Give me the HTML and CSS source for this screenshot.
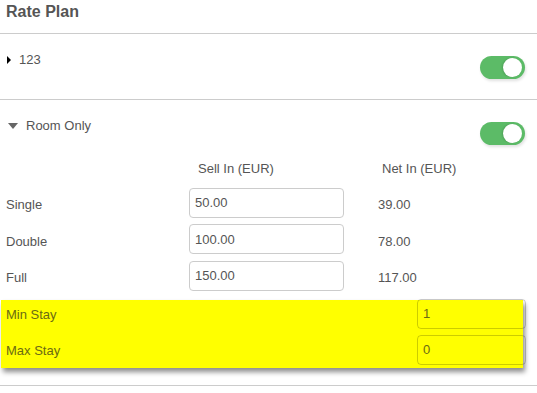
FILE: index.html
```html
<!DOCTYPE html>
<html lang="en">
<head>
  <meta charset="UTF-8">
  <title>Rate Plan</title>
  <link rel="stylesheet" href="styles.css">
</head>
<body>
  <div class="panel">
    <h2 class="panel-title">Rate Plan</h2>

    <div class="plan">
      <div class="plan-head">
        <div class="plan-name"><span class="caret caret-right"></span>123</div>
        <span class="toggle on"><span class="knob"></span></span>
      </div>
    </div>

    <div class="plan open">
      <div class="plan-head">
        <div class="plan-name"><span class="caret caret-down"></span>Room Only</div>
        <span class="toggle on"><span class="knob"></span></span>
      </div>

      <div class="rates">
        <div></div>
        <div class="col-head sell">Sell In (EUR)</div>
        <div class="col-head net">Net In (EUR)</div>

        <div class="rate-label">Single</div>
        <input class="rate-input" type="text" value="50.00">
        <div class="net-value">39.00</div>

        <div class="rate-label">Double</div>
        <input class="rate-input" type="text" value="100.00">
        <div class="net-value">78.00</div>

        <div class="rate-label">Full</div>
        <input class="rate-input" type="text" value="150.00">
        <div class="net-value">117.00</div>
      </div>

      <div class="stay-box">
        <div class="stay-row">
          <span class="stay-label">Min Stay</span>
          <input class="stay-input" type="text" value="1">
        </div>
        <div class="stay-row">
          <span class="stay-label">Max Stay</span>
          <input class="stay-input" type="text" value="0">
        </div>
      </div>
    </div>
  </div>
</body>
</html>
```

FILE: styles.css
```css
body {
  margin: 0;
  font-family: "Liberation Sans", Arial, sans-serif;
  font-size: 13px;
  color: #555;
  background: #fff;
}

.panel {
  width: 537px;
}

.panel-title {
  margin: 0;
  padding: 3px 6px 0;
  height: 30px;
  font-size: 16px;
  font-weight: bold;
  color: #555;
  border-bottom: 1px solid #ccc;
}

.plan {
  border-bottom: 1px solid #ccc;
  height: 65px;
}

.plan.open {
  height: 285px;
}

.plan-head {
  display: flex;
  justify-content: space-between;
  align-items: flex-start;
  padding: 18px 12px 0 6px;
}

.plan-name {
  display: flex;
  align-items: center;
  line-height: 16px;
}

.caret {
  display: inline-block;
  width: 0;
  height: 0;
}

.caret-right {
  margin: 0 8px 0 1px;
  border-top: 4px solid transparent;
  border-bottom: 4px solid transparent;
  border-left: 4px solid #000;
}

.caret-down {
  margin: 0 8px 0 2px;
  border-left: 5px solid transparent;
  border-right: 5px solid transparent;
  border-top: 6px solid #666;
}

.toggle {
  position: relative;
  display: inline-block;
  width: 45px;
  height: 23px;
  margin-top: 4px;
  border-radius: 12px;
  background: #5cbb67;
  box-shadow: 1px 2px 3px rgba(0, 0, 0, 0.12);
}

.knob {
  position: absolute;
  top: 2px;
  right: 3px;
  width: 19px;
  height: 19px;
  border-radius: 50%;
  background: #fff;
  box-shadow: -1px 0 2px rgba(0, 0, 0, 0.15);
}

.rates {
  display: grid;
  grid-template-columns: 183px 155px auto;
  row-gap: 6.5px;
  padding: 16px 0 0 6px;
  align-items: center;
}

.col-head {
  margin-bottom: 5px;
}

.col-head.sell {
  padding-left: 9px;
}

.col-head.net {
  padding-left: 38px;
}

.rate-label {
  padding-top: 4px;
}

.rate-input,
.stay-input {
  box-sizing: border-box;
  height: 30px;
  padding: 0 5px;
  font-family: "Liberation Sans", Arial, sans-serif;
  font-size: 13px;
  color: #555;
  border: 1px solid #ccc;
  border-radius: 4px;
  background: transparent;
}

.rate-input {
  width: 155px;
}

.net-value {
  padding: 4px 0 0 34px;
}

.stay-box {
  display: flex;
  flex-direction: column;
  gap: 6px;
  margin: 9px 14px 0 1px;
  padding-bottom: 3px;
  background: #ffff00;
  box-shadow: 2px 4px 5px rgba(0, 0, 0, 0.45);
  color: #6b6b14;
}

.stay-row {
  display: flex;
  justify-content: space-between;
  align-items: center;
  height: 30px;
}

.stay-row:first-child {
  margin-top: -1px;
}

.stay-label {
  padding: 2px 0 0 5px;
}

.stay-input {
  width: 109px;
  margin-right: -3px;
  color: #6b6b14;
  border-color: rgba(0, 0, 0, 0.2);
}
```
